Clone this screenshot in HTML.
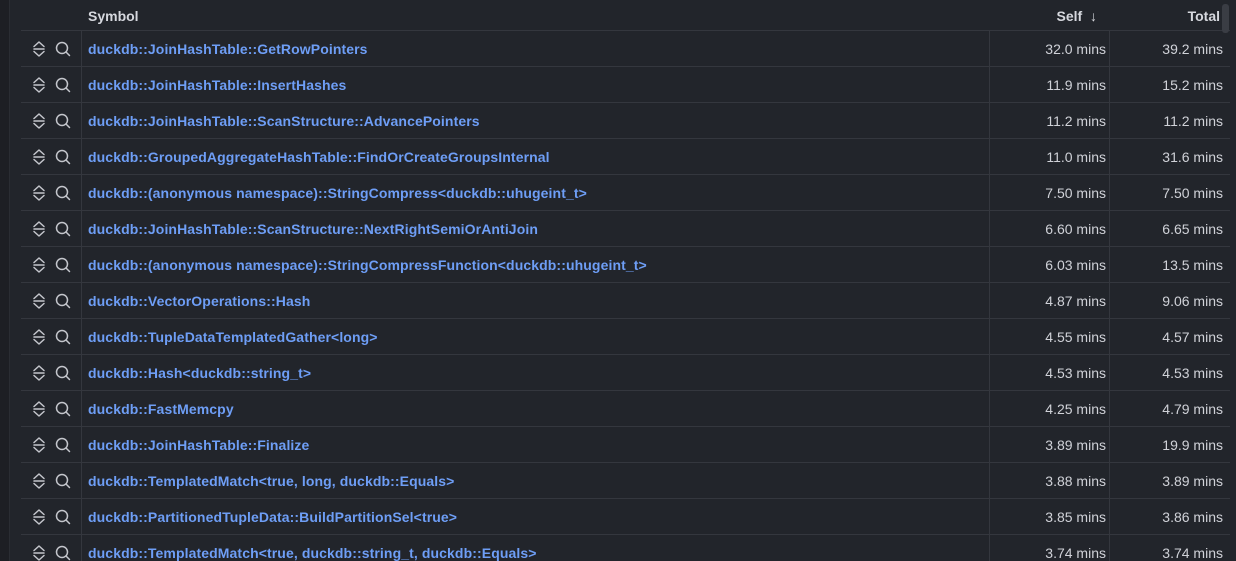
<!DOCTYPE html><html><head><style>
html,body{margin:0;width:1236px;height:561px;overflow:hidden}
body{background:#22252b;font-family:"Liberation Sans",sans-serif;position:relative}
.strip{position:absolute;left:0;top:0;width:9px;height:561px;background:#1d1f24;border-right:1px solid #2a2d33}
.hdr{position:absolute;top:0;left:21px;width:1209px;height:30px;border-bottom:1px solid #34373e;color:#d6d8de;font-size:14px;font-weight:bold}
.row{position:absolute;left:21px;width:1209px;height:35px;border-bottom:1px solid #34373e;font-size:14px}
.c1{position:absolute;left:60px;top:0;height:100%;border-left:1px solid #34373e}
.c2{position:absolute;left:968px;top:0;height:100%;border-left:1px solid #34373e}
.c3{position:absolute;left:1088px;top:0;height:100%;border-left:1px solid #34373e}
.sym{position:absolute;left:67px;top:10px;color:#6e9ef6;font-weight:bold;font-size:14px;letter-spacing:0.1px}
.self{position:absolute;right:124px;top:10px;color:#d0d2d8}
.tot{position:absolute;right:7px;top:10px;color:#d0d2d8}
svg{position:absolute;top:9px}
.sb{position:absolute;left:1222px;top:4px;width:7px;height:29px;background:#3a3d44;border-radius:3px}
</style></head><body>
<div class="strip"></div>
<div class="hdr"><span style="position:absolute;left:67px;top:8px">Symbol</span><span style="position:absolute;right:133px;top:8px">Self &nbsp;<span style="font-weight:normal">↓</span></span><span style="position:absolute;right:10px;top:8px">Total</span></div>
<div class="sb"></div>
<div id="t"></div>
<script>
const d=[["duckdb::JoinHashTable::GetRowPointers","32.0","39.2"],["duckdb::JoinHashTable::InsertHashes","11.9","15.2"],["duckdb::JoinHashTable::ScanStructure::AdvancePointers","11.2","11.2"],["duckdb::GroupedAggregateHashTable::FindOrCreateGroupsInternal","11.0","31.6"],["duckdb::(anonymous namespace)::StringCompress<duckdb::uhugeint_t>","7.50","7.50"],["duckdb::JoinHashTable::ScanStructure::NextRightSemiOrAntiJoin","6.60","6.65"],["duckdb::(anonymous namespace)::StringCompressFunction<duckdb::uhugeint_t>","6.03","13.5"],["duckdb::VectorOperations::Hash","4.87","9.06"],["duckdb::TupleDataTemplatedGather<long>","4.55","4.57"],["duckdb::Hash<duckdb::string_t>","4.53","4.53"],["duckdb::FastMemcpy","4.25","4.79"],["duckdb::JoinHashTable::Finalize","3.89","19.9"],["duckdb::TemplatedMatch<true, long, duckdb::Equals>","3.88","3.89"],["duckdb::PartitionedTupleData::BuildPartitionSel<true>","3.85","3.86"],["duckdb::TemplatedMatch<true, duckdb::string_t, duckdb::Equals>","3.74","3.74"]];
const esc=s=>s.replace(/</g,"&lt;").replace(/>/g,"&gt;");
let h="";d.forEach((r,i)=>{h+=`<div class="row" style="top:${31+i*36}px"><div class="c1"></div><div class="c2"></div><div class="c3"></div>
<svg style="left:10px" width="16" height="18" viewBox="0 0 16 18" fill="none" stroke="#c4c6cc" stroke-width="1.5" stroke-linecap="round" stroke-linejoin="round"><path d="M3 6.5L8 2l5 4.5M3 11.5L8 16l5-4.5M3 9h10"/></svg>
<svg style="left:33px" width="18" height="18" viewBox="0 0 18 18" fill="none" stroke="#c4c6cc" stroke-width="1.5" stroke-linecap="round"><circle cx="8" cy="8" r="5.5"/><path d="M12 12l3.5 3.5"/></svg>
<span class="sym">${esc(r[0])}</span><span class="self">${r[1]} mins</span><span class="tot">${r[2]} mins</span></div>`});
document.getElementById("t").innerHTML=h;
</script>
</body></html>
